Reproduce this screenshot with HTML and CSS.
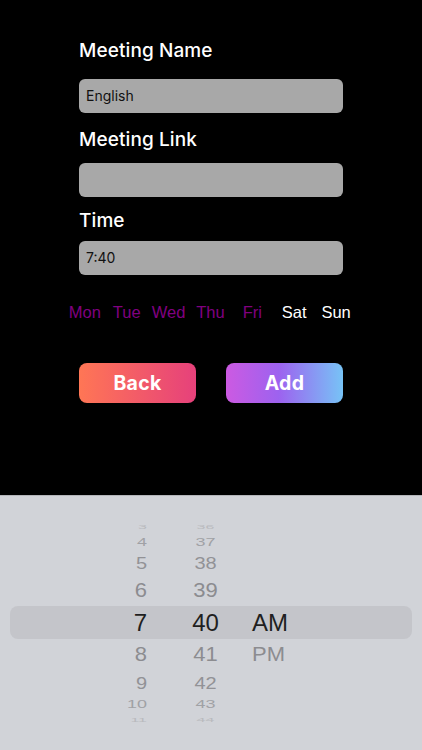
FILE: index.html
```html
<!DOCTYPE html>
<html lang="en">
<head>
    <meta charset="UTF-8">
    <meta name="viewport" content="width=device-width, initial-scale=1.0">
    <title>Add Meeting</title>
    <link rel="stylesheet" href="styles.css">
</head>
<body>
    <div class="screen">
        <div class="form">
            <div class="label first">Meeting Name</div>
            <div class="field">English</div>
            <div class="label second">Meeting Link</div>
            <div class="field"></div>
            <div class="label third">Time</div>
            <div class="field">7:40</div>

            <div class="days">
                <span class="day on">Mon</span>
                <span class="day on">Tue</span>
                <span class="day on">Wed</span>
                <span class="day on">Thu</span>
                <span class="day on">Fri</span>
                <span class="day">Sat</span>
                <span class="day">Sun</span>
            </div>

            <div class="buttons">
                <button class="btn back">Back</button>
                <button class="btn add">Add</button>
            </div>
        </div>

        <div class="picker">
            <div class="row r3"><span class="h">3</span><span class="m">36</span><span class="p"></span></div>
            <div class="row r4"><span class="h">4</span><span class="m">37</span><span class="p"></span></div>
            <div class="row r5"><span class="h">5</span><span class="m">38</span><span class="p"></span></div>
            <div class="row r6"><span class="h">6</span><span class="m">39</span><span class="p"></span></div>
            <div class="row sel"><span class="h">7</span><span class="m">40</span><span class="p">AM</span></div>
            <div class="row r6"><span class="h">8</span><span class="m">41</span><span class="p">PM</span></div>
            <div class="row r5 r9"><span class="h">9</span><span class="m">42</span><span class="p"></span></div>
            <div class="row r4 r10"><span class="h">10</span><span class="m">43</span><span class="p"></span></div>
            <div class="row r3 r11"><span class="h">11</span><span class="m">44</span><span class="p"></span></div>
        </div>
    </div>
</body>
</html>
```

FILE: styles.css
```css
body {
    margin: 0;
    padding: 0;
    background: #000;
    font-family: Inter, "Liberation Sans", sans-serif;
}

.screen {
    height: 100vh;
    display: flex;
    flex-direction: column;
}

.form {
    flex: 1;
    padding: 39px 79px 0 79px;
}

.label {
    color: #fff;
    font-size: 19px;
    font-weight: 500;
    letter-spacing: 0.1px;
    height: 24px;
    line-height: 24px;
}

.label.second {
    margin-top: 15px;
}

.label.third {
    margin-top: 12px;
}

.label.first + .field {
    margin-top: 16px;
}

.label.second + .field {
    margin-top: 11px;
}

.label.third + .field {
    margin-top: 8px;
}

.field {
    height: 34px;
    border-radius: 6px;
    background-color: #a8a8a8;
    color: #111;
    font-size: 14px;
    line-height: 34px;
    padding: 0 7px;
    box-sizing: border-box;
}

.days {
    display: grid;
    grid-template-columns: repeat(7, 1fr);
    width: 293px;
    margin: 27px 0 0 -15px;
    height: 20px;
    line-height: 20px;
    font-family: "Liberation Sans", Arial, sans-serif;
    font-size: 16.5px;
}

.day {
    text-align: center;
    color: #fff;
}

.day.on {
    color: #800080;
}

.buttons {
    display: flex;
    justify-content: space-between;
    margin-top: 41px;
}

.btn {
    width: 117px;
    height: 40px;
    border: none;
    border-radius: 8px;
    color: #fff;
    font-family: Inter, "Liberation Sans", sans-serif;
    font-size: 19.5px;
    font-weight: 700;
    letter-spacing: 0.3px;
    cursor: pointer;
}

.btn.back {
    background: linear-gradient(90deg, #ff7655, #e6417b);
}

.btn.add {
    background: linear-gradient(90deg, #cc5ae2, #9d62ef 45%, #77c3f6);
}

.picker {
    height: 255px;
    box-sizing: border-box;
    background-color: #d1d3d8;
    border-top: 1px solid #b3b5b9;
    padding: 23px 10px 0 10px;
    font-family: "Liberation Sans", Arial, sans-serif;
}

.row {
    display: grid;
    grid-template-columns: 137px 105px 1fr;
    align-items: center;
    color: #8c8c90;
    font-size: 22px;
    height: 31px;
}

.row span {
    display: block;
    line-height: 1;
}

.row .h {
    text-align: right;
}

.row .m {
    text-align: center;
    padding-left: 12px;
}

.row .p {
    text-align: left;
}

.row.r6 span {
    transform: scaleY(0.9);
}

.row.sel {
    height: 33px;
    font-size: 24px;
    color: #1f1f21;
    background-color: #c4c5ca;
    border-radius: 8px;
}

.row.r5 {
    height: 24px;
    font-size: 20px;
    color: #929296;
}

.row.r5 span {
    transform: scaleY(0.82);
}

.row.r9 {
    height: 25px;
}

.row.r4 {
    height: 18px;
    font-size: 18px;
    color: #a0a1a5;
}

.row.r4 span {
    transform: scaleY(0.62);
}

.row.r10 {
    height: 17px;
    font-size: 18px;
}

.row.r3 {
    height: 14px;
    font-size: 16px;
    color: #b9babe;
}

.row.r3 span {
    transform: scaleY(0.32);
}
```
